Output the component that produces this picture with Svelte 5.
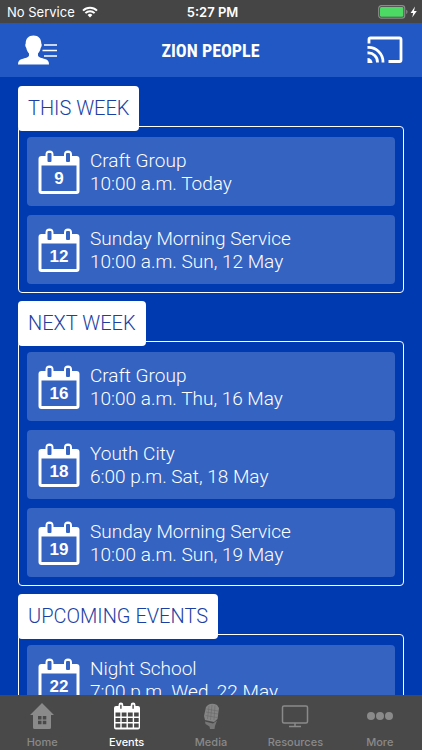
<script>
    const groups = [
        {
            title: "THIS WEEK",
            events: [
                {day: 9, name: "Craft Group", time: "10:00 a.m. Today"},
                {day: 12, name: "Sunday Morning Service", time: "10:00 a.m. Sun, 12 May"},
            ],
        },
        {
            title: "NEXT WEEK",
            events: [
                {day: 16, name: "Craft Group", time: "10:00 a.m. Thu, 16 May"},
                {day: 18, name: "Youth City", time: "6:00 p.m. Sat, 18 May"},
                {day: 19, name: "Sunday Morning Service", time: "10:00 a.m. Sun, 19 May"},
            ],
        },
        {
            title: "UPCOMING EVENTS",
            events: [
                {day: 22, name: "Night School", time: "7:00 p.m. Wed, 22 May"},
            ],
        },
    ];

    const tabs = ["Home", "Events", "Media", "Resources", "More"];
    let current = $state("Events");
</script>

<div class="app">
    <div class="status">
        <div class="carrier">
            <span>No Service</span>
            <svg width="16" height="12" viewBox="0 0 16 12" fill="none" stroke="#fff" stroke-width="2">
                <path d="M1 4.6a10 10 0 0 1 14 0M3.4 7.1a6.5 6.5 0 0 1 9.2 0" />
                <path d="M8 11.4 5.6 9a3.4 3.4 0 0 1 4.8 0z" fill="#fff" stroke="none" />
            </svg>
        </div>
        <time>5:27 PM</time>
        <div class="power">
            <svg width="40" height="14" viewBox="0 0 40 14">
                <rect x="0.7" y="0.7" width="26" height="12.4" rx="2.6" fill="none" stroke="#8b8b8b" stroke-width="1.2" />
                <rect x="2" y="2" width="23.4" height="9.8" rx="1.4" fill="#4cd964" />
                <path d="M28.2 4.8c1.8.6 1.8 3.6 0 4.2z" fill="#8b8b8b" />
                <path d="M37 1.6 32.6 8h2.6l-1 4.4 4.6-6.4H36z" fill="#fff" />
            </svg>
        </div>
    </div>

    <header>
        <button aria-label="Profile menu">
            <svg width="40" height="30" viewBox="0 0 40 30">
                <path fill="#fff" d="M15.500 0.500C20.500 0.500 23.300 3.600 23.300 8.500C24 9 23.900 11.500 22.700 13C22.300 15.500 21 17.500 20 18.500V20.500C20.500 22.500 24 23 27 24C30 25 31 26.500 31 29.500H0C0 26.500 1 25 4 24C7 23 10.500 22.500 11 20.500V18.500C10 17.500 8.700 15.500 8.300 13C7.100 11.500 7 9 7.700 8.500C7.700 3.600 10.500 0.500 15.500 0.500Z" />
                <path stroke="#fff" stroke-width="1.400" d="M26 10h13M24.500 15.500h14.500M26 21h13" />
            </svg>
        </button>
        <h1>ZION PEOPLE</h1>
        <button aria-label="Cast">
            <svg width="36" height="28" viewBox="0 0 36 28" fill="none" stroke="#fff" stroke-width="2.800">
                <path d="M2 7.500V3.500Q2 2 3.500 2H32.500Q34 2 34 3.500V24Q34 25.500 32.500 25.500H21.500" />
                <path d="M.5 11.500a14.500 14.500 0 0 1 15.500 15M.5 17a9 9 0 0 1 10 9.500" />
                <path d="M.5 22a5 5 0 0 1 5 5h-5z" fill="#fff" stroke="none" />
            </svg>
        </button>
    </header>

    <main>
        {#each groups as group}
            <section>
                <h2>{group.title}</h2>
                <ul>
                    {#each group.events as event}
                        <li>
                            <svg class="calendar" width="42" height="44" viewBox="0 0 42 44">
                                <path fill="#fff" fill-rule="evenodd" d="M3 6h4.500V4.500a4 4 0 0 1 8 0V6h10.500V4.500a4 4 0 0 1 8 0V6H38.500a3 3 0 0 1 3 3V41a3 3 0 0 1-3 3H3.500a3 3 0 0 1-3-3V9a3 3 0 0 1 3-3zM3.500 15.500V41H38.500V15.500z" />
                                <rect x="9.500" y="3" width="4" height="9" rx="1" fill="#3563c1" />
                                <rect x="28" y="3" width="4" height="9" rx="1" fill="#3563c1" />
                                <text x="21" y="34" text-anchor="middle">{event.day}</text>
                            </svg>
                            <div>
                                <h3>{event.name}</h3>
                                <p>{event.time}</p>
                            </div>
                        </li>
                    {/each}
                </ul>
            </section>
        {/each}
    </main>

    <nav>
        {#each tabs as tab}
            <button class:active={tab === current} onclick={() => current = tab}>
                <svg width="28" height="28" viewBox="0 0 28 28" fill="currentColor">
                    {#if tab === "Home"}
                        <path fill-rule="evenodd" d="M14 1 26 13H23V25.500Q23 27 21.500 27H6.500Q5 27 5 25.500V13H2zM10 14v3.500h3.500V14zM14.800 14v3.500h3.500V14zM10 18.800v3.400h3.500v-3.400zM14.800 18.800v3.400h3.500v-3.400z" />
                    {:else if tab === "Events"}
                        <path fill-rule="evenodd" d="M3 4H5.500V3a2.400 2.400 0 0 1 4.800 0V4h7.400V3a2.400 2.400 0 0 1 4.800 0V4H25a2 2 0 0 1 2 2V25.500a2 2 0 0 1-2 2H3a2 2 0 0 1-2-2V6a2 2 0 0 1 2-2z" />
                        <path stroke="#494949" stroke-width="1.400" d="M7.900 2.800v4M20.100 2.800v4" />
                        <path stroke="#494949" stroke-width="4" stroke-dasharray="4.800 1.400" d="M2.500 12.500H25.700M2.500 18H25.700M2.500 23.500H25.700" />
                    {:else if tab === "Media"}
                        <path fill="#858585" d="M11 3Q15 .5 20 3L22 6 20.500 17 17 20 8 18 7 14 9 5z" />
                        <path fill="none" stroke="#6a6a6a" stroke-width="0.600" d="M12 4 10.500 17M15 3 13.500 18M18 3.500 17 18M9.500 7 21 9M9 10 21 12M8.500 13.500 20 15.500" />
                        <path fill="#777" d="M8 19.500 16 21.500 20 18.500 18 24 17.500 27H13L12.500 24.500 8.500 22z" />
                    {:else if tab === "Resources"}
                        <path fill="none" stroke="currentColor" stroke-width="1.500" d="M3 4H25Q26.500 4 26.500 5.500V19.500Q26.500 21 25 21H3Q1.500 21 1.500 19.500V5.500Q1.500 4 3 4zM14 21v3M8 24.500H20" />
                    {:else}
                        <circle cx="5" cy="14" r="4" />
                        <circle cx="14" cy="14" r="4" />
                        <circle cx="23" cy="14" r="4" />
                    {/if}
                </svg>
                <span>{tab}</span>
            </button>
        {/each}
    </nav>
</div>

<style>
    :global(body) {
        background-color: #003ab1;
    }
    .app {
        height: 100vh;
        display: flex;
        flex-direction: column;
        overflow: hidden;
        color: white;
        font-family: Inter, "Liberation Sans", sans-serif;
    }
    button {
        border: none;
        padding: 0;
        background: none;
        color: inherit;
        font-family: inherit;
        cursor: pointer;
    }
    svg {
        display: block;
    }
    .status {
        flex: none;
        height: 23px;
        padding: 0 4px 0 7px;
        display: grid;
        grid-template-columns: 1fr auto 1fr;
        align-items: center;
        background-color: #454545;
        font-size: 13px;
    }
    .carrier {
        display: flex;
        align-items: center;
        gap: 7px;
    }
    time {
        font-weight: 600;
    }
    .power {
        justify-self: end;
    }
    header {
        flex: none;
        height: 54px;
        padding: 0 19px 0 18px;
        display: grid;
        grid-template-columns: 1fr auto 1fr;
        align-items: center;
        background-color: #2258c3;
    }
    header button:last-child {
        justify-self: end;
    }
    header button:first-child {
        justify-self: start;
    }
    h1 {
        margin: 0;
        font-family: "Liberation Sans Narrow", "Roboto Condensed", "Liberation Sans", sans-serif;
        font-size: 18px;
        font-weight: 700;
    }
    main {
        flex: 1;
        min-height: 0;
        overflow: hidden;
        padding: 9px 18px;
        display: flex;
        flex-direction: column;
        gap: 8px;
        font-family: Roboto, "Liberation Sans", sans-serif;
    }
    section {
        flex: none;
        display: flex;
        flex-direction: column;
        align-items: flex-start;
    }
    h2 {
        margin: 0 0 -5px;
        padding: 0 10px;
        z-index: 1;
        border-radius: 4px;
        background-color: white;
        color: #1c3fa3;
        font-size: 20px;
        font-weight: 300;
        line-height: 45px;
    }
    ul {
        box-sizing: border-box;
        width: 100%;
        margin: 0;
        padding: 10px 8px 8px;
        border: 1px solid white;
        border-radius: 4px;
        list-style: none;
        display: flex;
        flex-direction: column;
        gap: 9px;
    }
    li {
        height: 69px;
        padding: 0 11px;
        display: flex;
        align-items: center;
        gap: 10px;
        border-radius: 4px;
        background-color: #3563c1;
    }
    .calendar text {
        fill: white;
        font-family: "Liberation Sans", sans-serif;
        font-size: 17px;
        font-weight: 700;
    }
    h3, p {
        margin: 0;
        font-size: 19px;
        font-weight: 300;
        line-height: 23px;
    }
    nav {
        flex: none;
        height: 55px;
        display: grid;
        grid-template-columns: repeat(5, 1fr);
        background-color: #494949;
    }
    nav button {
        display: flex;
        flex-direction: column;
        align-items: center;
        gap: 4px;
        padding-top: 7px;
        color: #8a8a8a;
        font-size: 11px;
        font-weight: 500;
        line-height: 16px;
    }
    nav .active {
        color: white;
    }
</style>
